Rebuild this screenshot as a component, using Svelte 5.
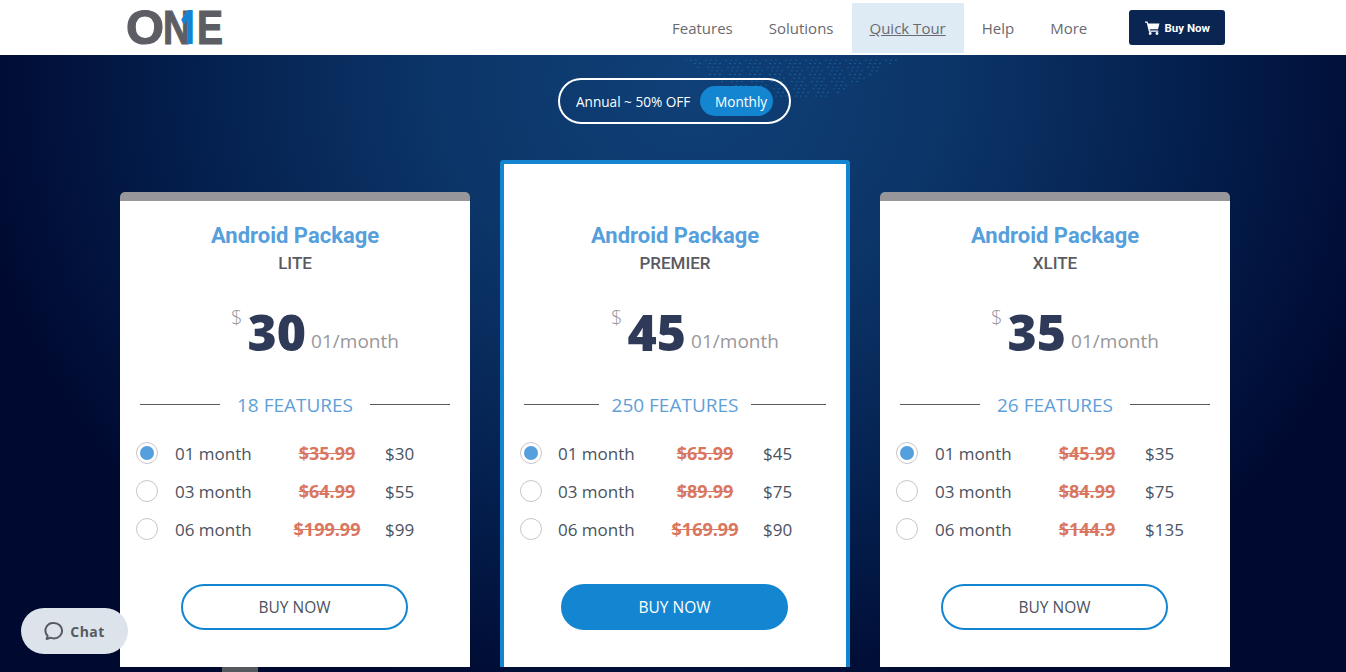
<script>
	const plans = [
		{ tier: 'LITE', price: 30, features: 18, rows: [['01 month', '$35.99', '$30'], ['03 month', '$64.99', '$55'], ['06 month', '$199.99', '$99']] },
		{ tier: 'PREMIER', price: 45, features: 250, featured: true, rows: [['01 month', '$65.99', '$45'], ['03 month', '$89.99', '$75'], ['06 month', '$169.99', '$90']] },
		{ tier: 'XLITE', price: 35, features: 26, rows: [['01 month', '$45.99', '$35'], ['03 month', '$84.99', '$75'], ['06 month', '$144.9', '$135']] }
	];
	const nav = ['Features', 'Solutions', 'Quick Tour', 'Help', 'More'];

	// dotted swoosh above the toggle, thinned out a bit so it isn't a solid blob
	const dots = [];
	for (let r = 0; r < 11; r++) {
		const odd = r % 2 ? 3 : 0;
		let n = 0;
		for (let x = r * 6 + odd; x < 214 - r * 6.5; x += 5) {
			n++;
			if ((n * 7 + r * 3) % 4 === 0) continue;
			dots.push({ x, y: 2 + r * 3.6 });
		}
	}
</script>

<header class="topbar">
	<svg class="logo" width="98" height="38" viewBox="0 0 98 38" aria-label="ONE">
		<text x="0" y="35" class="logo-text" textLength="38" lengthAdjust="spacingAndGlyphs">O</text>
		<text x="37" y="35" class="logo-text" textLength="28" lengthAdjust="spacingAndGlyphs">N</text>
		<text x="54" y="35" class="logo-one" textLength="16" lengthAdjust="spacingAndGlyphs">1</text>
		<text x="71" y="35" class="logo-text" textLength="26" lengthAdjust="spacingAndGlyphs">E</text>
	</svg>
	<nav class="menu">
		{#each nav as item}
			<a class="menu-item" class:active={item === 'Quick Tour'} href="#top">{item}</a>
		{/each}
	</nav>
	<button class="buy-top">
		<svg width="15" height="14" viewBox="0 0 15 14">
			<path d="M0 .6h2.6l.5 1.8h11.4l-1.5 5.9H4.7l.3 1.2h8.3v1.2H3.9L1.7 1.8H0z" fill="#fff" />
			<circle cx="5.2" cy="12.5" r="1.4" fill="#fff" />
			<circle cx="12" cy="12.5" r="1.4" fill="#fff" />
		</svg>
		Buy Now
	</button>
</header>

<main class="hero">
	<svg class="dots" width="220" height="44" viewBox="0 0 220 44">
		{#each dots as d}
			<circle cx={d.x} cy={d.y} r="0.55" fill="#1c86d0" />
		{/each}
	</svg>

	<div class="toggle">
		<span class="annual">Annual ~ 50% OFF</span>
		<span class="monthly">Monthly</span>
	</div>

	<section class="cards">
		{#each plans as plan}
			<article class="card" class:featured={plan.featured}>
				<h2>Android Package</h2>
				<h3>{plan.tier}</h3>
				<div class="price">
					<span class="cur">$</span>
					<span class="amount">{plan.price}</span>
					<span class="per">01/month</span>
				</div>
				<div class="count">
					<span class="rule"></span>
					<span class="count-text">{plan.features} FEATURES</span>
					<span class="rule"></span>
				</div>
				<ul class="rows">
					{#each plan.rows as row, i}
						<li class="row">
							<span class="radio" class:on={i === 0}></span>
							<span class="term">{row[0]}</span>
							<s class="old">{row[1]}</s>
							<span class="now">{row[2]}</span>
						</li>
					{/each}
				</ul>
				<button class="buy">BUY NOW</button>
			</article>
		{/each}
	</section>

	<span class="stub"></span>

	<button class="chat">
		<svg width="20" height="20" viewBox="0 0 20 20">
			<path d="M10 2a8 7.6 0 0 1 0 15.4c-1.3 0-2.5-.2-3.6-.7L2.6 18l1-3.2A7.6 7.6 0 0 1 10 2z" fill="none" stroke="#565b63" stroke-width="2" stroke-linejoin="round" />
		</svg>
		Chat
	</button>
</main>

<style>
	:global(body) {
		margin: 0;
		overflow: hidden;
		font-family: 'Open Sans', sans-serif;
	}
	.topbar {
		height: 55px;
		background: #fff;
		display: flex;
		align-items: flex-start;
		padding-left: 126px;
		box-sizing: border-box;
	}
	.logo {
		margin-top: 9px;
		flex: none;
		overflow: visible;
	}
	.logo-text {
		font-family: 'Liberation Sans', sans-serif;
		font-weight: 700;
		font-size: 48px;
		fill: #5d5e64;
		stroke: #5d5e64;
		stroke-width: 1.2px;
	}
	.logo-one {
		font-family: 'Open Sans', sans-serif;
		font-weight: 800;
		font-size: 48px;
		fill: #1583d2;
	}
	.menu {
		display: flex;
		margin-left: 430px;
		margin-top: 3px;
	}
	.menu-item {
		height: 50px;
		line-height: 50px;
		padding: 0 18px;
		font-size: 15px;
		color: #6a6a6e;
		text-decoration: none;
	}
	.menu-item.active {
		background: #deebf5;
		text-decoration: underline;
	}
	.buy-top {
		margin-left: 24px;
		margin-top: 10px;
		width: 96px;
		height: 35px;
		border: 0;
		border-radius: 3px;
		background: #0a2551;
		color: #fff;
		font-family: 'Roboto', sans-serif;
		font-weight: 700;
		font-size: 11.5px;
		display: flex;
		align-items: center;
		justify-content: center;
		gap: 5px;
		padding: 0;
	}
	.hero {
		position: relative;
		height: 617px;
		box-sizing: border-box;
		padding-top: 23px;
		background: radial-gradient(ellipse 720px 640px at 690px 30px, #0f4077 0%, #0c3568 35%, #04204f 68%, #000a31 100%);
		background-color: #000a31;
		overflow: hidden;
	}
	.dots {
		position: absolute;
		left: 686px;
		top: 3px;
	}
	.toggle {
		position: relative;
		width: 233px;
		height: 46px;
		box-sizing: border-box;
		margin-left: 558px;
		border: 2px solid #fff;
		border-radius: 23px;
		display: flex;
		align-items: center;
		color: #fff;
		font-size: 13.6px;
		padding-left: 16px;
	}
	.annual {
		width: 124px;
		flex: none;
		white-space: nowrap;
	}
	.monthly {
		width: 73px;
		height: 30px;
		line-height: 31px;
		background: #1485d0;
		border-radius: 15px;
		box-sizing: border-box;
		padding-left: 15px;
		white-space: nowrap;
	}
	.cards {
		display: flex;
		align-items: flex-end;
		gap: 30px;
		margin: 36px 0 0 120px;
	}
	.card {
		width: 350px;
		height: 475px;
		box-sizing: border-box;
		background: #fff;
		border-top: 9px solid #97969a;
		border-radius: 5px 5px 0 0;
		padding-top: 22px;
		text-align: center;
	}
	.card.featured {
		height: 507px;
		border: 4px solid #1485d0;
		border-bottom: 0;
		border-radius: 4px 4px 0 0;
		padding-top: 59px;
	}
	h2 {
		margin: 0;
		font-family: 'Roboto', sans-serif;
		font-weight: 700;
		font-size: 22px;
		line-height: 26px;
		color: #559fdc;
	}
	h3 {
		margin: 1px 0 0;
		font-family: 'Roboto', sans-serif;
		font-weight: 500;
		font-size: 17px;
		line-height: 26px;
		color: #5a5a60;
	}
	.price {
		display: flex;
		justify-content: center;
		align-items: flex-start;
		height: 60px;
		margin-top: 26px;
		margin-left: 40px;
	}
	.cur {
		font-size: 20px;
		line-height: 28px;
		color: #99979b;
		font-weight: 300;
		margin-top: 2px;
		margin-right: 5px;
	}
	.amount {
		font-size: 50px;
		line-height: 60px;
		font-weight: 800;
		color: #2e3a58;
	}
	.per {
		font-size: 19px;
		line-height: 26px;
		color: #99979b;
		margin: 26px 0 0 5px;
	}
	.count {
		display: flex;
		align-items: center;
		justify-content: space-between;
		margin: 29px 20px 0;
		height: 28px;
	}
	.rule {
		width: 80px;
		height: 1px;
		margin-bottom: 2px;
		background: #5a5a60;
	}
	.featured .rule {
		width: 75px;
	}
	.count-text {
		font-size: 19px;
		color: #5f9fd8;
		white-space: nowrap;
	}
	.rows {
		list-style: none;
		margin: 15px 0 0;
		padding: 0 0 0 16px;
		text-align: left;
	}
	.row {
		display: grid;
		grid-template-columns: 39px 110px 86px 1fr;
		align-items: center;
		height: 38px;
		font-size: 17px;
		color: #4b5260;
	}
	.featured .row {
		grid-template-columns: 38px 105px 86px 1fr;
	}
	.radio {
		width: 22px;
		height: 22px;
		box-sizing: border-box;
		border: 1px solid #c9c5cc;
		border-radius: 50%;
	}
	.radio.on {
		padding: 3px;
		background: #559fdc content-box;
	}
	.old {
		text-align: center;
		font-weight: 700;
		font-size: 18px;
		color: #d9765f;
		white-space: nowrap;
		padding-right: 2px;
	}
	.now {
		padding-left: 14px;
	}
	.buy {
		display: block;
		width: 227px;
		height: 46px;
		margin: 36px 0 0 61px;
		box-sizing: border-box;
		background: #fff;
		border: 2px solid #1485d0;
		border-radius: 23px;
		font-family: 'Open Sans', sans-serif;
		font-size: 15.5px;
		color: #4b5260;
		padding: 0;
	}
	.featured .buy {
		margin-left: 57px;
		background: #1485d0;
		color: #fff;
	}
	.stub {
		position: absolute;
		left: 222px;
		top: 612px;
		width: 36px;
		height: 5px;
		background: #55585f;
	}
	.chat {
		position: absolute;
		left: 21px;
		top: 553px;
		width: 107px;
		height: 46px;
		border: 0;
		border-radius: 23px;
		background: #dde3ea;
		color: #565b63;
		font-family: 'Open Sans', sans-serif;
		font-weight: 700;
		font-size: 14px;
		letter-spacing: 0.4px;
		display: flex;
		align-items: center;
		justify-content: center;
		gap: 6px;
		padding: 0;
	}
</style>
